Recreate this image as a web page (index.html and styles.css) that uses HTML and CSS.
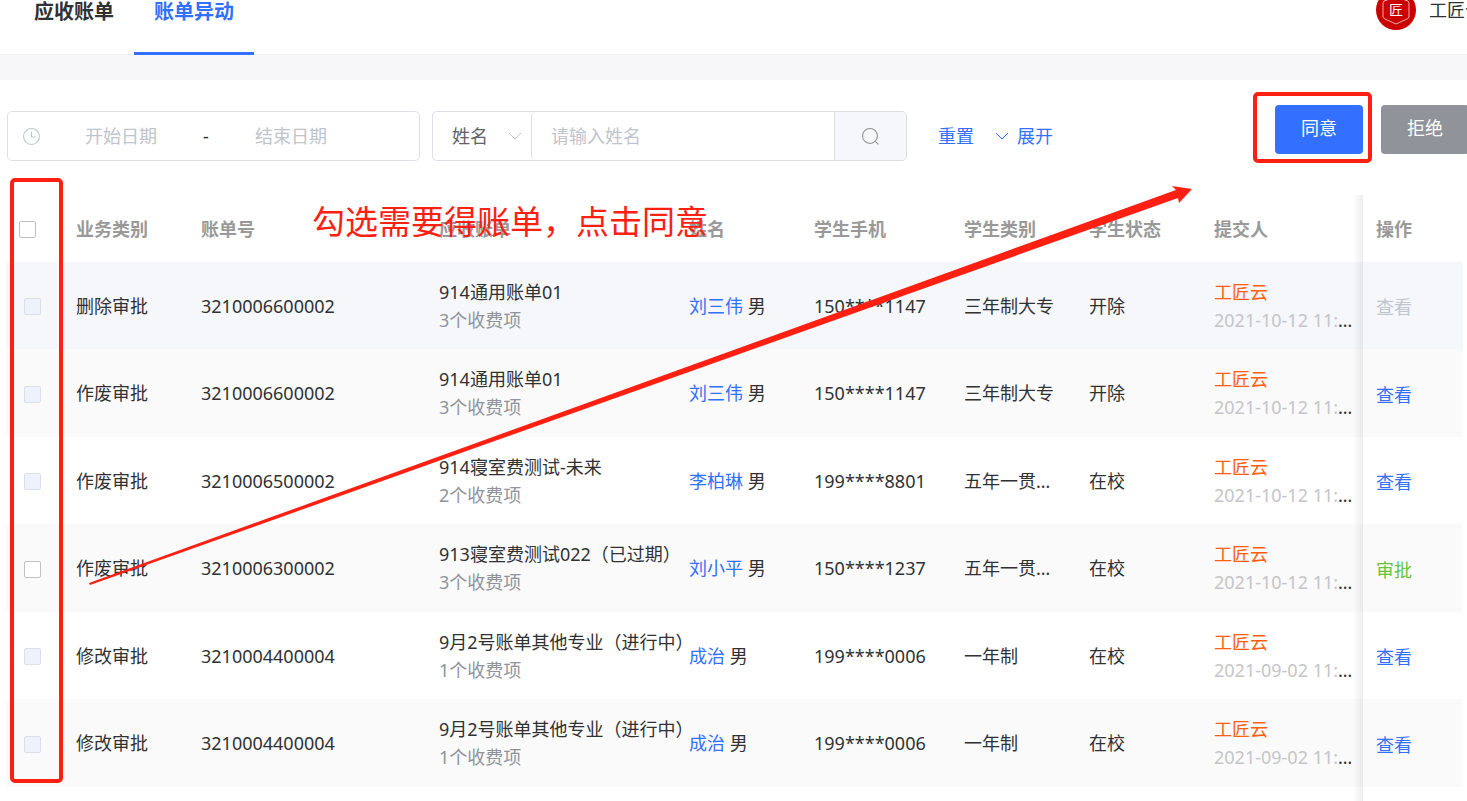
FILE: index.html
```html
<!DOCTYPE html>
<html lang="zh-CN">

<head>
  <meta charset="UTF-8">
  <meta name="viewport" content="width=device-width, initial-scale=1.0">
  <title>账单异动</title>
  <link rel="stylesheet" href="styles.css">
</head>

<body>
  <!-- 顶部导航 -->
  <header class="header">
    <nav class="tabs">
      <a class="tab" href="#bills">应收账单</a>
      <a class="tab active" href="#changes">账单异动</a>
    </nav>
    <div class="user">
      <svg class="avatar" viewBox="0 0 40 40">
        <circle cx="20" cy="20" r="20" fill="#cb0000" />
        <path d="M20 7 L32 11 Q33 12 33 14 V27 Q33 28 31 29 L20 34 L9 29 Q7 28 7 27 V14 Q7 12 8 11 Z" fill="none" stroke="#eeb0b0" stroke-width="1" />
        <text x="20" y="25" text-anchor="middle" font-size="14" fill="#fff">匠</text>
      </svg>
      <span>工匠云</span>
    </div>
  </header>

  <main class="main">
    <!-- 筛选条件 -->
    <form class="toolbar">
      <div class="date-range">
        <svg class="icon" viewBox="0 0 16 16">
          <circle cx="8" cy="8" r="7.500" />
          <path d="M8 3.500 V8.500 H12" />
        </svg>
        <input type="text" placeholder="开始日期" aria-label="开始日期">
        <span class="separator">-</span>
        <input type="text" placeholder="结束日期" aria-label="结束日期">
      </div>
      <div class="search-group">
        <div class="select-box">
          <select aria-label="搜索字段">
            <option>姓名</option>
          </select>
          <svg class="arrow-down" viewBox="0 0 14 8">
            <path d="M1 1 L7 7 L13 1" />
          </svg>
        </div>
        <input class="search-input" type="text" placeholder="请输入姓名" aria-label="请输入姓名">
        <button class="search-btn" type="button" aria-label="搜索">
          <svg class="icon" viewBox="0 0 16 16">
            <circle cx="7.500" cy="7.500" r="7" />
            <path d="M12.500 12.500 L15.500 15.500" />
          </svg>
        </button>
      </div>
      <a class="link reset" href="#reset">重置</a>
      <a class="link expand" href="#expand">
        <svg class="arrow-down" viewBox="0 0 14 8">
          <path d="M1 1 L7 7 L13 1" />
        </svg>
        展开
      </a>
      <div class="actions">
        <button class="btn primary" type="button">同意</button>
        <button class="btn info" type="button">拒绝</button>
      </div>
    </form>

    <!-- 账单列表 -->
    <div class="table-wrap">
      <table>
        <thead>
          <tr>
            <th class="col-check"><input type="checkbox" aria-label="全选"></th>
            <th class="col-type">业务类别</th>
            <th class="col-no">账单号</th>
            <th class="col-bill">应收账单</th>
            <th class="col-name">姓名</th>
            <th class="col-phone">学生手机</th>
            <th class="col-kind">学生类别</th>
            <th class="col-status">学生状态</th>
            <th class="col-user">提交人</th>
            <th class="col-action">操作</th>
          </tr>
        </thead>
        <tbody>
          <tr class="hover">
            <td class="check"><input type="checkbox" aria-label="选择" disabled></td>
            <td>删除审批</td>
            <td>3210006600002</td>
            <td class="bill">914通用账单01<br><span class="sub">3个收费项</span></td>
            <td><a class="link" href="#student">刘三伟</a> 男</td>
            <td>150****1147</td>
            <td>三年制大专</td>
            <td>开除</td>
            <td class="submit"><span class="submitter">工匠云</span><br><span class="time">2021-10-12 11:20:35</span></td>
            <td class="action"><a class="link disabled" href="#view">查看</a></td>
          </tr>
          <tr>
            <td class="check"><input type="checkbox" aria-label="选择" disabled></td>
            <td>作废审批</td>
            <td>3210006600002</td>
            <td class="bill">914通用账单01<br><span class="sub">3个收费项</span></td>
            <td><a class="link" href="#student">刘三伟</a> 男</td>
            <td>150****1147</td>
            <td>三年制大专</td>
            <td>开除</td>
            <td class="submit"><span class="submitter">工匠云</span><br><span class="time">2021-10-12 11:20:35</span></td>
            <td class="action"><a class="link" href="#view">查看</a></td>
          </tr>
          <tr>
            <td class="check"><input type="checkbox" aria-label="选择" disabled></td>
            <td>作废审批</td>
            <td>3210006500002</td>
            <td class="bill">914寝室费测试-未来<br><span class="sub">2个收费项</span></td>
            <td><a class="link" href="#student">李柏琳</a> 男</td>
            <td>199****8801</td>
            <td>五年一贯制大专</td>
            <td>在校</td>
            <td class="submit"><span class="submitter">工匠云</span><br><span class="time">2021-10-12 11:20:35</span></td>
            <td class="action"><a class="link" href="#view">查看</a></td>
          </tr>
          <tr>
            <td class="check"><input type="checkbox" aria-label="选择"></td>
            <td>作废审批</td>
            <td>3210006300002</td>
            <td class="bill">913寝室费测试022（已过期）<br><span class="sub">3个收费项</span></td>
            <td><a class="link" href="#student">刘小平</a> 男</td>
            <td>150****1237</td>
            <td>五年一贯制大专</td>
            <td>在校</td>
            <td class="submit"><span class="submitter">工匠云</span><br><span class="time">2021-10-12 11:20:35</span></td>
            <td class="action"><a class="link approve" href="#approve">审批</a></td>
          </tr>
          <tr>
            <td class="check"><input type="checkbox" aria-label="选择" disabled></td>
            <td>修改审批</td>
            <td>3210004400004</td>
            <td class="bill">9月2号账单其他专业（进行中）<br><span class="sub">1个收费项</span></td>
            <td><a class="link" href="#student">成治</a> 男</td>
            <td>199****0006</td>
            <td>一年制</td>
            <td>在校</td>
            <td class="submit"><span class="submitter">工匠云</span><br><span class="time">2021-09-02 11:20:35</span></td>
            <td class="action"><a class="link" href="#view">查看</a></td>
          </tr>
          <tr>
            <td class="check"><input type="checkbox" aria-label="选择" disabled></td>
            <td>修改审批</td>
            <td>3210004400004</td>
            <td class="bill">9月2号账单其他专业（进行中）<br><span class="sub">1个收费项</span></td>
            <td><a class="link" href="#student">成治</a> 男</td>
            <td>199****0006</td>
            <td>一年制</td>
            <td>在校</td>
            <td class="submit"><span class="submitter">工匠云</span><br><span class="time">2021-09-02 11:20:35</span></td>
            <td class="action"><a class="link" href="#view">查看</a></td>
          </tr>
        </tbody>
      </table>
      <div class="fixed-shadow"></div>
    </div>
  </main>

  <!-- 操作提示标注 -->
  <div class="mark mark-check"></div>
  <div class="mark mark-agree"></div>
  <p class="mark-text">勾选需要得账单，点击同意</p>
  <svg class="mark-arrow" viewBox="0 0 1104 400">
    <path d="M0 397 L1087 4 L1083 0 L1103 3 L1090 17 L1089 12 L1 399 Z" fill="#ff2011" />
  </svg>
</body>

</html>
```
FILE: styles.css
```css
* {
  box-sizing: border-box;
}

body {
  margin: 0;
  min-height: 100vh;
  display: flex;
  flex-direction: column;
  position: relative;
  overflow: hidden;
  background: #f7f7fa;
  color: #303133;
  font-family: "Noto Sans", "Noto Sans CJK SC", sans-serif;
  font-size: 18px;
  line-height: 28px;
}

input,
select,
button {
  font: inherit;
  color: inherit;
}

input::placeholder {
  color: #c0c4cc;
  opacity: 1;
}

a {
  text-decoration: none;
}

svg {
  display: block;
  flex: none;
}

/* 顶部导航 */
.header {
  height: 54px;
  display: flex;
  align-items: flex-start;
  background: #fff;
  box-shadow: 0 1px 0 #f2f2f5;
}

.tabs {
  display: flex;
  padding-left: 14px;
}

.tab {
  padding: 0 20px 28px;
  border-bottom: 3px solid transparent;
  font-size: 20px;
  font-weight: bold;
  line-height: 24px;
  color: #303133;
}

.tab.active {
  color: #3370ff;
  border-bottom-color: #3370ff;
}

.user {
  display: flex;
  align-items: center;
  gap: 13px;
  margin: -10px -16px 0 auto;
  white-space: nowrap;
}

.avatar {
  width: 40px;
  height: 40px;
}

.main {
  flex: 1;
  display: flex;
  flex-direction: column;
  margin-top: 26px;
  background: #fff;
}

/* 筛选条件 */
.toolbar {
  display: flex;
  align-items: center;
  height: 50px;
  margin: 31px 0 34px 7px;
}

.date-range {
  display: flex;
  align-items: center;
  width: 413px;
  height: 50px;
  padding-left: 15px;
  border: 1px solid #dcdfe6;
  border-radius: 5px;
}

.date-range .icon {
  margin-right: 6px;
}

.date-range input {
  width: 150px;
  padding: 0;
  border: 0;
  outline: 0;
  background: none;
  text-align: center;
}

.separator {
  width: 20px;
  text-align: center;
}

.icon {
  width: 17px;
  height: 17px;
  fill: none;
  stroke: #c0c4cc;
}

.arrow-down {
  width: 14px;
  height: 8px;
  fill: none;
  stroke: #c0c4cc;
}

.search-group {
  display: flex;
  width: 475px;
  height: 50px;
  margin-left: 12px;
  border: 1px solid #dcdfe6;
  border-radius: 5px;
  overflow: hidden;
}

.select-box {
  display: flex;
  align-items: center;
  width: 98px;
}

.select-box select {
  width: 98px;
  height: 48px;
  padding: 0 19px;
  border: 0;
  appearance: none;
  background: none;
  color: #606266;
}

.select-box .arrow-down {
  margin-left: -23px;
  pointer-events: none;
}

.search-input {
  flex: 1;
  min-width: 0;
  padding: 0 19px;
  border: 0;
  border-left: 1px solid #dcdfe6;
  border-radius: 5px 0 0 5px;
  outline: 0;
}

.search-btn {
  display: flex;
  align-items: center;
  justify-content: center;
  width: 72px;
  padding: 0;
  border: 0;
  border-left: 1px solid #dcdfe6;
  background: #f5f7fa;
}

.search-btn .icon {
  stroke: #909399;
}

.link {
  color: #3370ff;
}

.link.disabled {
  color: #c0c4cc;
}

.link.approve {
  color: #67c23a;
}

.reset {
  margin-left: 31px;
}

.expand {
  display: flex;
  align-items: center;
  gap: 8px;
  margin-left: 21px;
}

.expand .arrow-down {
  stroke: #3370ff;
}

.actions {
  display: flex;
  gap: 18px;
  margin: -14px -2px 0 auto;
}

.btn {
  width: 88px;
  height: 49px;
  padding: 0 0 2px;
  border: 0;
  border-radius: 4px;
  color: #fff;
}

.btn.primary {
  background: #3370ff;
}

.btn.info {
  background: #909399;
}

/* 账单列表 */
.table-wrap {
  flex: 1;
  position: relative;
  padding: 0 4px 0 6px;
}

table {
  width: 100%;
  table-layout: fixed;
  border-collapse: collapse;
}

th,
td {
  padding: 0 13px;
  text-align: left;
  white-space: nowrap;
  overflow: hidden;
  text-overflow: ellipsis;
}

th {
  height: 67px;
  color: #999;
}

td {
  height: 87px;
}

tbody tr:nth-child(even) {
  background: #fafafa;
}

tbody tr:nth-child(even) td {
  height: 88px;
}

tbody tr.hover {
  background: #f5f7fb;
}

.col-check {
  width: 57px;
}

.col-type,
.col-name,
.col-status {
  width: 125px;
}

.col-phone {
  width: 150px;
}

.col-kind {
  width: 125px;
}

.col-no {
  width: 238px;
}

.col-user {
  width: 162px;
}

.col-action {
  width: 100px;
}

th.col-check,
td.check {
  padding-top: 2px;
}

td.check {
  padding-left: 18px;
}

td.bill {
  padding-right: 0;
  overflow: visible;
}

td.submit {
  padding-right: 6px;
}

td.action {
  padding-top: 3px;
}

.sub {
  color: #909399;
}

.submitter {
  color: #ff6010;
}

.time {
  color: #c5c5c8;
}

input[type="checkbox"] {
  display: block;
  appearance: none;
  width: 17px;
  height: 17px;
  margin: 0;
  border: 1px solid #c0c0c4;
  border-radius: 2px;
  background: #fff;
}

input[type="checkbox"]:disabled {
  border-color: #dcdfe6;
  background: #edf2fc;
}

/* 固定列左侧阴影 */
.fixed-shadow {
  position: absolute;
  top: 0;
  right: 104px;
  bottom: 0;
  width: 10px;
  background: linear-gradient(to right, rgba(0, 0, 0, 0), rgba(0, 0, 0, 0.07));
}

/* 操作提示标注 */
.mark {
  position: absolute;
  border: 4px solid #ff2011;
  border-radius: 5px;
}

.mark-check {
  left: 10px;
  top: 178px;
  width: 53px;
  height: 605px;
}

.mark-agree {
  left: 1253px;
  top: 92px;
  width: 119px;
  height: 71px;
}

.mark-text {
  position: absolute;
  left: 312px;
  top: 198px;
  margin: 0;
  font-size: 33px;
  line-height: 48px;
  color: #ff2011;
}

.mark-arrow {
  position: absolute;
  left: 89px;
  top: 186px;
  width: 1104px;
  height: 400px;
}
```
